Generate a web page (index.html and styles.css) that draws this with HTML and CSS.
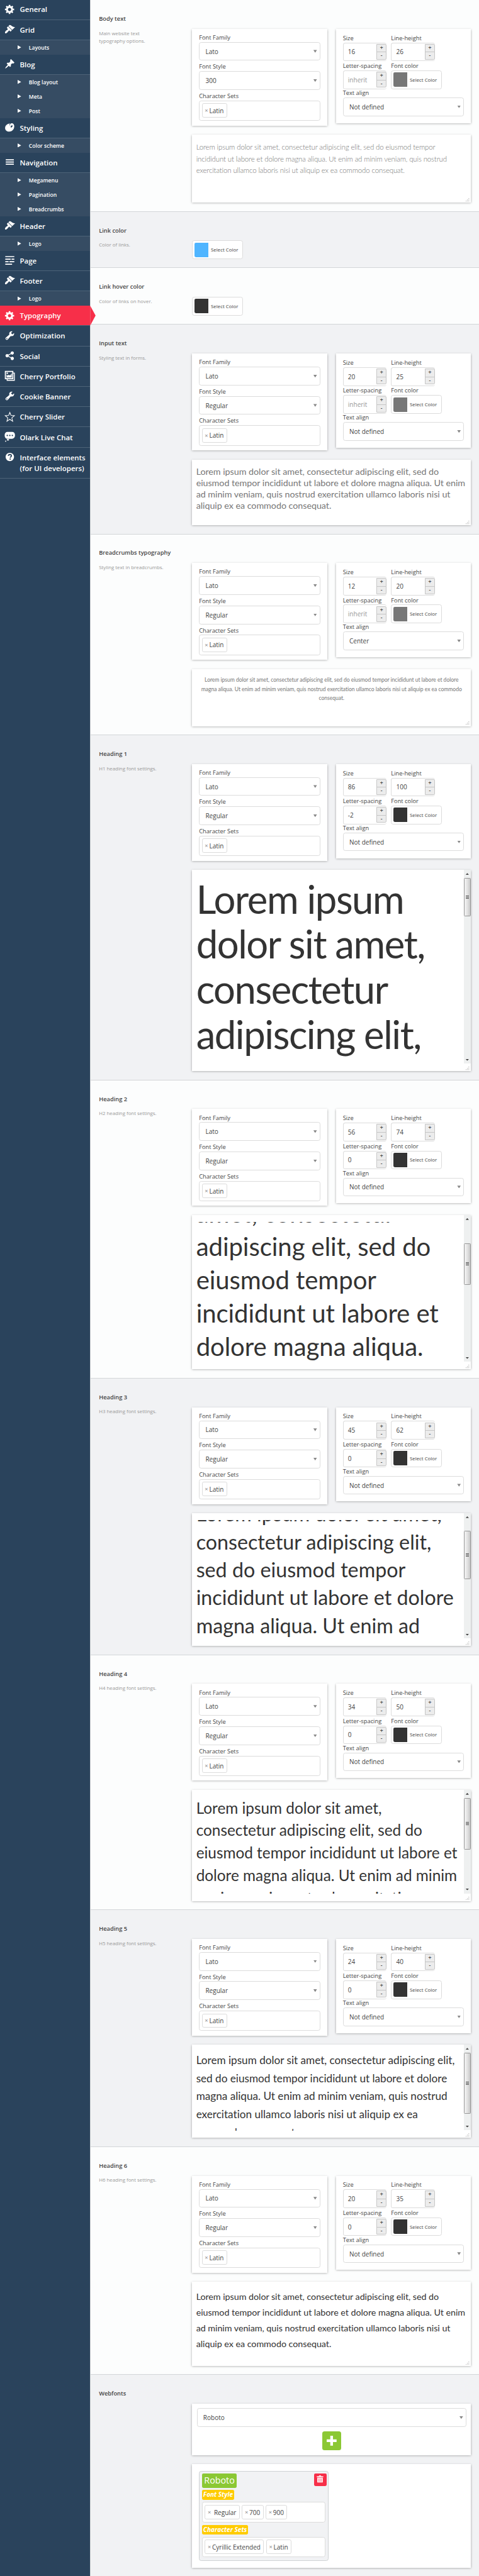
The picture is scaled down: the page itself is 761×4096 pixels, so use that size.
FILE: index.html
```html
<!DOCTYPE html>
<html lang="en">
<head>
<meta charset="utf-8">
<title>Typography options</title>
<link rel="stylesheet" href="styles.css">
</head>
<body>
<svg class="sprite" aria-hidden="true">
  <symbol id="gear" viewBox="0 0 20 20"><path d="M18 12h-2.18c-.17.7-.44 1.35-.81 1.93l1.54 1.54-2.1 2.1-1.54-1.54c-.58.36-1.23.63-1.91.79V19H8v-2.18c-.68-.16-1.33-.43-1.91-.79l-1.54 1.54-2.12-2.12 1.54-1.54c-.36-.58-.63-1.23-.79-1.91H1V9.03h2.17c.16-.7.44-1.35.8-1.94L2.43 5.55l2.1-2.1 1.54 1.54c.58-.37 1.24-.64 1.93-.81V2h3v2.18c.68.16 1.33.43 1.91.79l1.54-1.54 2.12 2.12-1.54 1.54c.36.59.64 1.24.8 1.94H18V12zm-8.5 1.5c1.66 0 3-1.34 3-3s-1.34-3-3-3-3 1.34-3 3 1.34 3 3 3z"/></symbol>
  <symbol id="brush" viewBox="0 0 20 20"><path d="M14.48 11.06L7.41 3.99l1.5-1.5c.5-.56 2.3-.47 3.51.32 1.21.8 1.43 1.28 2.91 2.1 1.18.64 2.45 1.26 4.45.85zm-.71.71L6.7 4.7 4.93 6.47c-.39.39-.39 1.02 0 1.41l1.06 1.06c.39.39.39 1.03 0 1.42-.6.6-1.43 1.11-2.21 1.69-.35.26-.7.53-1.01.84C1.43 14.23.4 16.08 1.4 17.07c.99 1 2.84-.03 4.18-1.36.31-.31.58-.66.85-1.02.57-.78 1.08-1.61 1.69-2.21.39-.39 1.02-.39 1.41 0l1.06 1.06c.39.39 1.02.39 1.41 0z"/></symbol>
  <symbol id="pin" viewBox="0 0 20 20"><path d="M10.44 3.02l1.82-1.82 6.36 6.35-1.83 1.82c-1.05-.68-2.48-.57-3.41.36l-.75.75c-.92.93-1.04 2.35-.35 3.41l-1.83 1.82-2.41-2.41-2.8 2.79c-.42.42-3.38 2.71-3.8 2.29s1.86-3.39 2.28-3.81l2.79-2.79L4.1 9.36l1.83-1.82c1.05.69 2.48.57 3.4-.36l.75-.75c.93-.92 1.05-2.35.36-3.41z"/></symbol>
  <symbol id="art" viewBox="0 0 20 20"><path fill-rule="evenodd" d="M9.200 3C6 3.200 1.300 6 1.300 11.300c0 4 3.400 6.500 7.600 6.500 6 0 10-5.300 9.200-11C17.700 3.200 15.200 1.800 13 2.400c-1.700.5-2.600 1.700-3 3.700-.3.700-.8.400-.7-.4.100-1.300.8-2 .9-2.500 0-.2-.4-.2-1-.2zm4.900 3.200c1-.2 1.400.8.800 1.900-.7 1.300-2.300 2.500-3.100 2-.7-.6-.2-3.500 2.300-3.900z"/></symbol>
  <symbol id="menu" viewBox="0 0 20 20"><path d="M2.500 5h15v2h-15zm0 4h15v2h-15zm0 4h15v2h-15z"/></symbol>
  <symbol id="page" viewBox="0 0 20 20"><path d="M1.600 2.500h16.700v2H1.600zm0 4.700h10v2h-10zm11.500 0h5.200v2h-5.200zM1.600 11.900h6.200v2H1.600zm7.700 0h9v2h-9zM1.600 16.500h12.600v2H1.600z"/></symbol>
  <symbol id="wrench" viewBox="0 0 20 20"><path d="M16.680 9.770c-1.340 1.340-3.300 1.670-4.950.99l-5.410 6.520c-.99.99-2.590.99-3.580 0s-.99-2.590 0-3.570l6.520-5.420c-.68-1.650-.35-3.610.99-4.950 1.280-1.280 3.120-1.620 4.720-1.060l-2.890 2.890 2.820 2.820 2.860-2.870c.53 1.580.18 3.390-1.080 4.650zM3.810 16.210c.4.390 1.040.390 1.430 0 .4-.4.4-1.040 0-1.430-.390-.4-1.030-.4-1.430 0-.390.390-.390 1.030 0 1.430z"/></symbol>
  <symbol id="share" viewBox="0 0 20 20"><path d="M14.500 12c1.660 0 3 1.340 3 3s-1.340 3-3 3-3-1.340-3-3c0-.24.03-.46.09-.69l-4.380-2.300c-.55.610-1.330.990-2.210.990-1.660 0-3-1.340-3-3s1.340-3 3-3c.88 0 1.660.390 2.210.990l4.380-2.300c-.06-.23-.09-.45-.09-.69 0-1.660 1.340-3 3-3s3 1.340 3 3-1.340 3-3 3c-.88 0-1.660-.390-2.210-.990l-4.380 2.300c.06.23.09.45.09.69s-.03.46-.09.69l4.380 2.300c.55-.61 1.330-.99 2.210-.99z"/></symbol>
  <symbol id="gallery" viewBox="0 0 20 20"><path fill-rule="evenodd" d="M.8 1h15.700v3h2.700v15.200H4.200v-3H.8zm2 2v11.200h11.700V3zm13.700 2.600v10.600H6v1.200h11.600V5.600zM4 13V8l2 1.200L8.200 8l2.300 1.600L13.500 5v8zM5.300 3.800a1.500 1.500 0 1 1 0 3 1.500 1.500 0 0 1 0-3z"/></symbol>
  <symbol id="star" viewBox="0 0 20 20"><path fill="none" stroke="currentColor" stroke-width="1.200" d="M10 2l2.200 5.700 6.300.4-4.800 4 1.600 6.300L10 14.800l-5.300 3.600 1.600-6.300-4.800-4 6.300-.4z"/></symbol>
  <symbol id="chat" viewBox="0 0 20 20"><path fill-rule="evenodd" d="M6 1h8.500A5 5 0 0 1 19.500 6v2.200a5.600 5.600 0 0 1-5.500 5.500H6A5.500 5.500 0 0 1 .5 8.200V6A5 5 0 0 1 6 1zm-.7 5.200a1.300 1.300 0 1 0 0 2.600 1.300 1.300 0 0 0 0-2.600zm4.700 0a1.300 1.300 0 1 0 0 2.600 1.300 1.300 0 0 0 0-2.600zm4.700 0a1.300 1.300 0 1 0 0 2.600 1.300 1.300 0 0 0 0-2.600zM5.800 14.200h1.500a1.200 1.200 0 0 1 0 2.700H5.800a1.300 1.300 0 0 1 0-2.700zM2.300 17a1 1 0 1 1 0 2.100 1 1 0 0 1 0-2.100z"/></symbol>
  <symbol id="help" viewBox="0 0 20 20"><circle cx="10" cy="10" r="7.800"/><path class="cut" d="M7.300 8c.1-1.700 1.200-2.500 2.800-2.500 1.700 0 2.800.9 2.800 2.300 0 1-.5 1.600-1.200 2.100-.6.400-.8.700-.8 1.400"/><circle class="dot" cx="10.700" cy="13.900" r="1.300"/></symbol>
  <symbol id="trash" viewBox="0 0 20 20"><path fill-rule="evenodd" d="M7 3.200C7.300 1.500 8.500.7 10 .7s2.700.8 3 2.500h5v2.500H2V3.200zm1.500 0h3c-.2-.7-.8-1-1.500-1s-1.300.3-1.500 1zM3.300 7h13.400v11.500H3.300zM6.300 8.500v8.300h1V8.500zm3.200 0v8.300h1V8.500zm3.200 0v8.300h1V8.500z"/></symbol>
</svg>
<div class="layout">
  <nav class="sidebar" id="sidebar"></nav>
  <main class="content" id="content">
  </main>
</div>
<script src="app.js"></script>
</body>
</html>
```

FILE: styles.css
```css
/* 1rem stands for ten design units */
html { font-size: 7.163px; }
*, *::before, *::after { box-sizing: border-box; }
body {
  margin: 0;
  font-family: "Open Sans", sans-serif;
  font-size: 1.4rem;
  color: #444;
  background: #f1f2f4;
}
.sprite { position: absolute; width: 0; height: 0; }
.layout { display: flex; height: 4096px; overflow: hidden; }

/* Sidebar */
.sidebar { width: 20rem; flex: none; background: #2a435c; color: #fff; }
.item {
  position: relative;
  display: flex;
  gap: 1rem;
  height: 4.5rem;
  padding: 1rem 0 0 1rem;
  border-bottom: 1px solid #4d6378;
  font-size: 1.6rem;
  font-weight: 600;
  line-height: 2.4rem;
  white-space: nowrap;
}
.item:first-child { height: 4.4rem; padding-top: .9rem; }
.item:last-child { height: 6.9rem; }
.item svg { width: 2.4rem; height: 2.4rem; fill: currentColor; flex: none; margin-top: -.1rem; }
.cut { fill: none; stroke: #2a435c; stroke-width: 2.1; }
.dot { fill: #2a435c; }
.item.active { background: #f72f49; }
.item.active::after {
  content: "";
  position: absolute;
  left: 100%;
  top: 0;
  width: 1.2rem;
  height: 4.4rem;
  background: #f72f49;
  clip-path: polygon(0 0, 100% 50%, 0 100%);
}
.sub {
  display: flex;
  align-items: center;
  gap: 1.7rem;
  height: 3.2rem;
  padding: .2rem 0 0 3.9rem;
  background: #364c63;
  font-size: 1.2rem;
  font-weight: 600;
}
.sub::before {
  content: "";
  width: .8rem;
  height: .9rem;
  margin-top: -.2rem;
  background: #fff;
  clip-path: polygon(0 0, 100% 50%, 0 100%);
}

/* Sections */
.content { flex: 1; border-left: 1px solid #d5d8da; }
.section {
  display: flex;
  padding: 0 1.8rem;
  border-bottom: 1px solid #d3d6d8;
  background: #f1f2f4;
}
.section.light { background: #fcfdfd; }
.section:last-child { border-bottom: 0; }
.info { width: 20.7rem; flex: none; white-space: nowrap; }
.info h2 { margin: 3.2rem 0 1.4rem; font-size: 1.3rem; font-weight: 600; line-height: 1.9rem; color: #444; }
.info p { margin: 0; font-size: 1.1rem; line-height: 1.8rem; color: #999; }
.controls { flex: 1; min-width: 0; padding-top: 6.4rem; }
.cards { display: flex; align-items: flex-start; gap: 2rem; height: 21.5rem; margin-bottom: 2rem; }
.card { background: #fff; box-shadow: 0 .1rem .5rem rgba(0, 0, 0, .35); }
.card.fonts { flex: 1; height: 21.5rem; padding: 1.13rem 1.5rem 0; }
.card.metrics { flex: 1; height: 20.9rem; padding: 1.23rem 1.5rem 0; }
.label { display: block; height: 1.8rem; font-size: 1.3rem; line-height: 1.7rem; white-space: nowrap; }
.select, .number, .picker, .tags {
  display: flex;
  align-items: center;
  height: 4.14rem;
  border: 1px solid #dcdcdc;
  border-radius: .5rem;
  background: #fff;
  white-space: nowrap;
}
.select { justify-content: space-between; padding: 0 .6rem 0 1.3rem; }
.select::after {
  content: "";
  width: .8rem;
  height: .6rem;
  background: #888;
  clip-path: polygon(0 0, 100% 0, 50% 100%);
}
.fonts .select { margin-bottom: .56rem; }
.tags { height: 4.54rem; align-items: flex-start; gap: .5rem; padding: .5rem; }
.tag {
  display: flex;
  align-items: center;
  height: 3.2rem;
  padding: 0 .6rem 0 .5rem;
  border: 1px solid #dcdcdc;
  border-radius: .4rem;
}
.tag i { width: .9rem; margin-right: .1rem; font-style: normal; font-weight: 600; color: #999; font-size: 1.3rem; line-height: 1; }
.tag.wide i { margin-right: .5rem; }
.row { display: grid; grid-template-columns: 9.7rem 11.2rem; column-gap: 1rem; margin-bottom: .26rem; }
.row + .row { margin-bottom: .06rem; }
.number { width: 9.7rem; padding-left: 1rem; border-right: 0; justify-content: space-between; }
.number .muted { color: #999; }
.steps { width: 2.2rem; height: 3.54rem; border: 1px solid #c6c6c6; border-radius: 0 .3rem .3rem 0; background: #ececec; }
.steps b { display: block; height: 50%; font-weight: 600; font-size: 1.2rem; line-height: 1.6rem; text-align: center; }
.steps b + b { border-top: 1px solid #c6c6c6; }
.picker { width: 11.2rem; padding-left: .4rem; gap: .6rem; font-size: 1.1rem; }
.picker::before { content: ""; width: 3rem; height: 3.2rem; border-radius: .3rem 0 0 .3rem; background: var(--swatch); }

/* Text preview */
.preview { position: relative; display: flex; margin-bottom: 2rem; }
.view { flex: 1; min-width: 0; margin: 1.5rem 0 1.6rem .87rem; overflow: hidden; }
.text { font-family: Lato, sans-serif; white-space: nowrap; }
.grip { position: absolute; right: .3rem; bottom: .2rem; width: .8rem; height: .8rem; fill: #aaa; }
.scroll { width: 1.6rem; margin-bottom: 1.7rem; background: #eef0f0; display: flex; flex-direction: column; align-items: center; }
.scroll::before, .scroll::after { content: ""; width: .7rem; height: .4rem; flex: none; background: #444; clip-path: polygon(50% 0, 100% 100%, 0 100%); }
.scroll::before { margin-top: .7rem; }
.scroll::after { margin: auto 0 .6rem; transform: scaleY(-1); }
.thumb {
  width: 1.5rem;
  flex: none;
  border: 1px solid #979797;
  border-radius: .2rem;
  background: linear-gradient(90deg, #f4f4f4, #e2e2e2 50%, #c9c9c9);
  display: flex;
  align-items: center;
  justify-content: center;
}
.thumb::before { content: ""; width: .7rem; height: .8rem; background: repeating-linear-gradient(#555 0 .1rem, transparent .1rem .3rem); }

/* Webfonts */
.add { height: 11.4rem; padding: 1rem; margin-bottom: 2rem; }
.plus {
  display: flex;
  align-items: center;
  justify-content: center;
  width: 4.2rem;
  height: 4.2rem;
  margin: 1rem auto 0;
  border-radius: .5rem;
  background: #8bc834;
}
.plus svg { width: 2.2rem; height: 2.2rem; fill: #fff; }
.chosen { height: 23rem; padding: 1.5rem; }
.font {
  position: relative;
  width: 28.8rem;
  height: 20rem;
  padding: .5rem .6rem 0 .5rem;
  border: 1px solid #cfd2d4;
  border-radius: .5rem;
  background: #f1f2f4;
}
.name, .caption { display: block; width: max-content; color: #fff; border-radius: .3rem; }
.name { height: 3.1rem; padding: 0 .5rem; font-size: 2rem; line-height: 3.1rem; background: #8bc834; margin-bottom: .5rem; }
.caption { height: 2.2rem; padding: 0 .3rem; font-size: 1.4rem; font-weight: 700; font-style: italic; line-height: 2.2rem; background: #ffcc00; margin-bottom: .5rem; }
.font .tags { margin-bottom: .5rem; }
.trash {
  position: absolute;
  top: .4rem;
  right: .4rem;
  width: 2.8rem;
  height: 2.8rem;
  padding: .3rem .5rem;
  border-radius: .3rem;
  background: #f72f49;
}
.trash svg { display: block; width: 1.8rem; height: 1.9rem; fill: #fff; }
```

FILE: app.js
```js
const menu = [
  ['gear', 'General'],
  ['brush', 'Grid', 'Layouts'],
  ['pin', 'Blog', 'Blog layout', 'Meta', 'Post'],
  ['art', 'Styling', 'Color scheme'],
  ['menu', 'Navigation', 'Megamenu', 'Pagination', 'Breadcrumbs'],
  ['brush', 'Header', 'Logo'],
  ['page', 'Page'],
  ['brush', 'Footer', 'Logo'],
  ['gear', 'Typography'],
  ['wrench', 'Optimization'],
  ['share', 'Social'],
  ['gallery', 'Cherry Portfolio'],
  ['wrench', 'Cookie Banner'],
  ['star', 'Cherry Slider'],
  ['chat', 'Olark Live Chat'],
  ['help', 'Interface elements<br>(for UI developers)']
];
document.getElementById('sidebar').innerHTML = menu.map(([icon, name, ...subs]) =>
  `<div class="item${name === 'Typography' ? ' active' : ''}"><svg><use href="#${icon}"/></svg><span>${name}</span></div>` +
  subs.map(s => `<div class="sub">${s}</div>`).join('')).join('');

const long20 = ['Lorem ipsum dolor sit amet, consectetur adipiscing elit, sed do', 'eiusmod tempor incididunt ut labore et dolore magna aliqua. Ut enim', 'ad minim veniam, quis nostrud exercitation ullamco laboris nisi ut', 'aliquip ex ea commodo consequat.'];
// h: section height, thumb: [offset from the top, length], skip: scrolled distance, track: fine letter spacing
const sections = [
  { title: 'Body text', desc: 'Main website text<br>typography options.', h: 470, style: '300', size: 16, lh: 26, color: '#777', weight: 300, track: -.165,
    lines: ['Lorem ipsum dolor sit amet, consectetur adipiscing elit, sed do eiusmod tempor', 'incididunt ut labore et dolore magna aliqua. Ut enim ad minim veniam, quis nostrud', 'exercitation ullamco laboris nisi ut aliquip ex ea commodo consequat.'] },
  { title: 'Link color', desc: 'Color of links.', h: 125, picker: '#4fb5ff' },
  { title: 'Link hover color', desc: 'Color of links on hover.', h: 126, picker: '#333' },
  { title: 'Input text', desc: 'Styling text in forms.', h: 465, size: 20, lh: 25, color: '#777', track: -.06, lines: long20 },
  { title: 'Breadcrumbs typography', desc: 'Styling text in breadcrumbs.', h: 446, size: 12, lh: 20, color: '#777', align: 'Center', track: -.05,
    lines: ['Lorem ipsum dolor sit amet, consectetur adipiscing elit, sed do eiusmod tempor incididunt ut labore et dolore', 'magna aliqua. Ut enim ad minim veniam, quis nostrud exercitation ullamco laboris nisi ut aliquip ex ea commodo', 'consequat.'] },
  { title: 'Heading 1', desc: 'H1 heading font settings.', h: 766, size: 86, lh: 100, ls: '-2', track: -2, color: '#333', thumb: [18.5, 84],
    lines: ['Lorem ipsum', 'dolor sit amet,', 'consectetur', 'adipiscing elit,'] },
  { title: 'Heading 2', desc: 'H2 heading font settings.', h: 662, size: 56, lh: 74, ls: '0', track: -.1, color: '#333', thumb: [63.5, 92], skip: 56.5,
    lines: ['amet, consectetur', 'adipiscing elit, sed do', 'eiusmod tempor', 'incididunt ut labore et', 'dolore magna aliqua.'] },
  { title: 'Heading 3', desc: 'H3 heading font settings.', h: 614, size: 45, lh: 62, ls: '0', color: '#333', thumb: [39.5, 107], skip: 44,
    lines: ['Lorem ipsum dolor sit amet,', 'consectetur adipiscing elit,', 'sed do eiusmod tempor', 'incididunt ut labore et dolore', 'magna aliqua. Ut enim ad'] },
  { title: 'Heading 4', desc: 'H4 heading font settings.', h: 566, size: 34, lh: 50, ls: '0', color: '#333', thumb: [18.5, 115],
    lines: ['Lorem ipsum dolor sit amet,', 'consectetur adipiscing elit, sed do', 'eiusmod tempor incididunt ut labore et', 'dolore magna aliqua. Ut enim ad minim', 'veniam, quis nostrud exercitation'] },
  { title: 'Heading 5', desc: 'H5 heading font settings.', h: 526, size: 24, lh: 40, ls: '0', track: -.03, color: '#333', thumb: [18.5, 135],
    lines: ['Lorem ipsum dolor sit amet, consectetur adipiscing elit,', 'sed do eiusmod tempor incididunt ut labore et dolore', 'magna aliqua. Ut enim ad minim veniam, quis nostrud', 'exercitation ullamco laboris nisi ut aliquip ex ea', 'commodo consequat.'] },
  { title: 'Heading 6', desc: 'H6 heading font settings.', h: 506, size: 20, lh: 35, ls: '0', track: -.06, color: '#333', lines: long20 }
];

const label = t => `<span class="label">${t}</span>`;
const select = t => `<div class="select">${t}</div>`;
const tag = (t, c = '') => `<span class="tag ${c}"><i>×</i>${t}</span>`;
const number = v => `<div class="number"><span${v === 'inherit' ? ' class="muted"' : ''}>${v}</span><span class="steps"><b>+</b><b>-</b></span></div>`;
const picker = c => `<div class="picker" style="--swatch:${c}">Select Color</div>`;
const grip = '<svg class="grip" viewBox="0 0 8 8"><path d="M6 0h1.5v1.5H6zM3 3h1.5v1.5H3zM6 3h1.5v1.5H6zM0 6h1.5v1.5H0zM3 6h1.5v1.5H3zM6 6h1.5v1.5H6z"/></svg>';

const typography = s => `
  <div class="cards">
    <div class="card fonts">
      ${label('Font Family')}${select('Lato')}
      ${label('Font Style')}${select(s.style || 'Regular')}
      ${label('Character Sets')}<div class="tags">${tag('Latin')}</div>
    </div>
    <div class="card metrics">
      <div class="row"><div>${label('Size')}${number(s.size)}</div><div>${label('Line-height')}${number(s.lh)}</div></div>
      <div class="row"><div>${label('Letter-spacing')}${number(s.ls || 'inherit')}</div><div>${label('Font color')}${picker(s.color)}</div></div>
      ${label('Text align')}${select(s.align || 'Not defined')}
    </div>
  </div>
  <div class="card preview" style="height:${(s.h - 319) / 10}rem">
    <div class="view"><div class="text" style="font-size:${s.size / 10}rem;line-height:${s.lh / 10}rem;font-weight:${s.weight || 400};color:${s.color};letter-spacing:${(s.track || 0) / 10}rem;text-align:${s.align || 'left'};margin-top:${-(s.skip || 0) / 10}rem;margin-right:${s.align ? .87 : 0}rem">${s.lines.join('<br>')}</div></div>
    ${s.thumb ? `<div class="scroll"><div class="thumb" style="margin-top:${(s.thumb[0] - 11) / 10}rem;height:${s.thumb[1] / 10}rem"></div></div>` : ''}
    ${grip}
  </div>`;

let count = 0;
const section = (title, desc, h, body) => `<section class="section${count++ % 2 ? '' : ' light'}" style="height:${h / 10}rem">
  <div class="info"><h2>${title}</h2><p>${desc}</p></div>
  <div class="controls">${body}</div></section>`;

document.getElementById('content').innerHTML =
  sections.map(s => section(s.title, s.desc, s.h, s.picker ? picker(s.picker) : typography(s))).join('') +
  section('Webfonts', '', 446, `
    <div class="card add">${select('Roboto')}<div class="plus"><svg viewBox="0 0 22 22"><path d="M8 0h6v8h8v6h-8v8H8v-8H0V8h8z"/></svg></div></div>
    <div class="card chosen"><div class="font">
      <span class="name">Roboto</span>
      <span class="caption">Font Style</span><div class="tags">${tag('Regular', 'wide')}${tag('700')}${tag('900')}</div>
      <span class="caption">Character Sets</span><div class="tags">${tag('Cyrillic Extended')}${tag('Latin')}</div>
      <div class="trash"><svg><use href="#trash"/></svg></div>
    </div></div>`);
```
